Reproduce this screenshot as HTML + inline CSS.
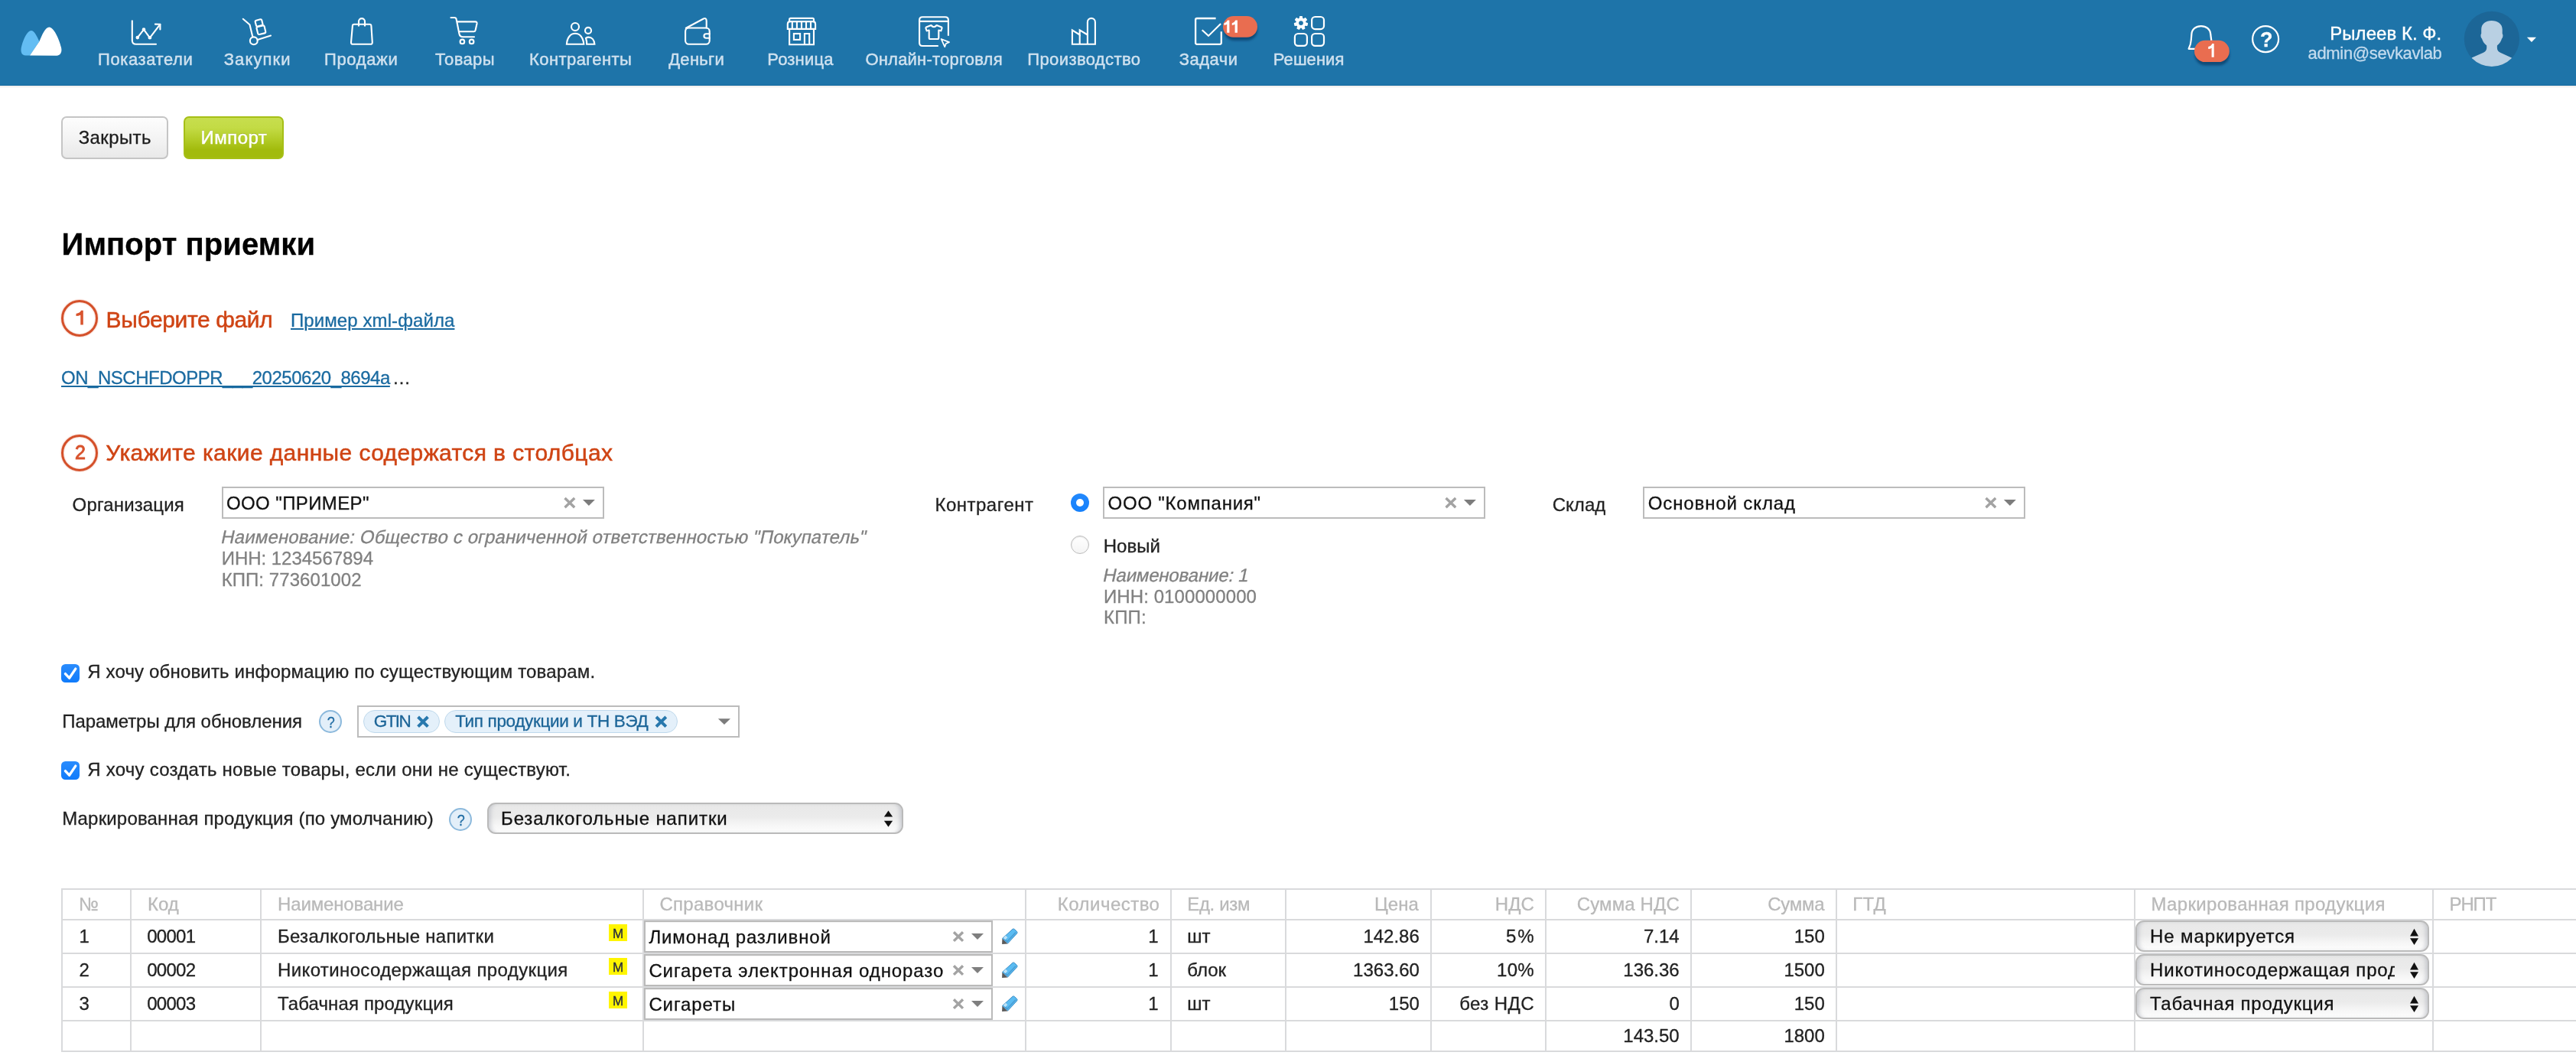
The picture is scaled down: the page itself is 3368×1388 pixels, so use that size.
<!DOCTYPE html>
<html lang="ru">
<head>
<meta charset="utf-8">
<title>Импорт приемки</title>
<style>
html,body{margin:0;padding:0;background:#fff;}
body{width:3368px;height:1388px;overflow:hidden;position:relative;font-family:"Liberation Sans",sans-serif;}
.t{position:absolute;white-space:pre;line-height:1;-webkit-text-stroke:0.3px currentColor;font-family:"Liberation Sans",sans-serif;}
.abs{position:absolute;box-sizing:border-box;}
#hdr{left:0;top:0;width:3368px;height:112px;background:#1e74a9;border-bottom:1.3px solid #14699f;box-shadow:0 1px 0 #f8f3f1,0 2px 1px rgba(0,0,0,.07);}
svg{position:absolute;overflow:visible;}
.btn{border-radius:7px;border:2px solid #c5c5c5;background:linear-gradient(#fdfdfd,#f4f4f4 50%,#e9e9e9);}
.btn.g{border-color:#a6bf17;background:linear-gradient(#c7de4e 0%,#c3db45 25%,#b2cb26 55%,#a2bb0d 80%,#a2bb0d 100%);}
.step{width:48px;height:48px;border-radius:50%;border:3.6px solid #d4502a;box-shadow:0 0 2px rgba(216,83,45,.6), inset 0 0 2px rgba(216,83,45,.5);}
.combo{height:42px;border:2px solid #bcbcbc;background:#fff;}
.hq{width:30px;height:30px;border-radius:50%;border:2px solid #8cb9dc;background:#e3eff9;}
.chip{height:30px;border-radius:15px;border:1.5px solid #bfd9ec;background:#e4f0fa;}
.sel{border-radius:11px;border:2px solid #bababa;background:linear-gradient(#e8e8e8 0%,#ebebeb 45%,#f5f5f5 70%,#fdfdfd 100%);box-shadow:inset 6px 0 5px -3px rgba(160,165,175,.45),inset -6px 0 5px -3px rgba(160,165,175,.45);}
.cb{width:24px;height:24px;border-radius:5.5px;background:linear-gradient(#2a8cfd,#107bfb);}
.v{width:2px;top:1161px;height:214px;background:#d9dadc;}
.h{left:80px;width:3288px;height:2px;background:#d9dadc;}
.m{width:24px;height:22px;background:#fff500;}
.rc{height:42px;border:2px solid #bababa;background:#fff;box-shadow:inset 0 1px 1px rgba(0,0,0,.05);}
</style>
</head>
<body>
<div id="hdr" class="abs"></div>
<!--ICONS-->
<svg width="3368" height="1388" viewBox="0 0 3368 1388" style="left:0;top:0">
<!-- logo -->
<path d="M33.5 72.6 C28 72.6 26.3 67 28.3 60 C31 50 36 40 40.7 40 C45 40 48.5 48 51.4 54.2 L39 72.6 Z" fill="#63bdf3"/>
<path d="M39 72.6 L51.4 54.2 C55 46 59 35.6 64.4 35.6 C70 35.6 77 50 80 62 C81.5 68 79 72.7 74 72.7 Z" fill="#fff"/>
<g fill="none" stroke="#fff" stroke-width="2.12" stroke-linecap="round" stroke-linejoin="round">
<!-- 1 chart -->
<path d="M172.8 27.2 V52.8 Q172.8 57.8 177.8 57.8 H204"/>
<polyline points="179.8,49.1 188,38.6 195.9,49.3 209.3,31.9"/>
<polyline points="202.9,31.6 209.4,31.8 209.4,38.4"/>
<!-- 2 hand truck -->
<path d="M317.8 24.8 L326.5 32.2 L330.3 47.9"/>
<circle cx="331.8" cy="53.3" r="4.9"/>
<path d="M336.6 51.9 L354 46.6"/>
<rect x="334.2" y="25.9" width="8.8" height="8" rx="1.6" transform="rotate(-14 338.6 29.9)"/>
<rect x="336.2" y="34.1" width="10.4" height="10.2" rx="1.8" transform="rotate(-13 341.4 39.2)"/>
<!-- 3 bag -->
<path d="M463 31.8 H483.3 Q485.3 31.8 485.4 33.8 L486.8 55.3 Q486.9 57.8 484.4 57.8 H461.4 Q458.9 57.8 459 55.3 L460.9 33.8 Q461 31.8 463 31.8 Z"/>
<path d="M469 34.4 V28.1 A4 4 0 0 1 477 28.1 V34.4" stroke-linecap="butt"/>
<!-- 4 cart -->
<path d="M589.5 23 H594 Q596.3 23 596.7 25.3 L600.4 44 Q601.2 48.3 605.3 48.3 H620"/>
<path d="M598 28.4 H621.5 Q624 28.4 623.5 31 L621.6 39.5 Q621.2 41.2 619.5 41.2 H600.3"/>
<circle cx="604.4" cy="54.4" r="2.8"/><circle cx="616.6" cy="54.4" r="2.8"/>
<!-- 5 people -->
<circle cx="752" cy="35" r="5"/>
<path d="M740.9 57.8 C741.5 49 746 43.8 752 43.8 C758 43.8 762.7 49 763.3 57.8 Z" stroke-linejoin="miter"/>
<circle cx="769" cy="39.9" r="4"/>
<path d="M766 49.8 Q767.5 48.6 769.5 48.6 C774 48.6 777 52.5 777.4 57.8 H767.2 Q767.2 53.5 766 49.8 Z" stroke-linejoin="miter"/>
<!-- 6 wallet -->
<rect x="896.1" y="36.5" width="31.6" height="21.3" rx="4.5"/>
<path d="M896.8 36.8 L919.3 24.7 Q923.7 22.6 923.7 27.5 V36.5"/>
<path d="M927.7 44.2 H923.2 A2.75 2.75 0 0 0 923.2 49.7 H927.7"/>
<!-- 7 store -->
<g stroke-linecap="butt" stroke-linejoin="miter">
<path d="M1032.1 28.1 V25.4 Q1032.1 23.9 1033.6 23.9 H1062.5 Q1064 23.9 1064 25.4 V28.1"/>
<path d="M1029.8 37.9 V31.5 Q1029.8 28.1 1033.2 28.1 H1062.7 Q1066.1 28.1 1066.1 31.5 V37.9 Z"/>
<path d="M1035.8 28.1V37.9M1041.9 28.1V37.9M1048 28.1V37.9M1054 28.1V37.9M1060 28.1V37.9"/>
<path d="M1032.1 37.9 V58.2 H1064 V37.9"/>
<rect x="1037.9" y="44" width="8.2" height="7.9"/>
<path d="M1051.9 58.2 V44 H1058.2 V58.2"/>
</g>
<!-- 8 online -->
<path d="M1239.9 46.7 V26.3 Q1239.9 22.3 1235.9 22.3 H1206.1 Q1202.1 22.3 1202.1 26.3 V56 Q1202.1 60 1206.1 60 H1226.8" stroke-linecap="butt"/>
<path d="M1202.1 27.9 H1239.9"/>
<path d="M1217.4 33 Q1221 37.4 1224.6 33 L1231 35.5 Q1231.8 36 1231.5 37 L1230.3 40.3 L1227.3 39.5 V49.5 Q1227.3 51 1225.8 51 H1216.2 Q1214.7 51 1214.7 49.5 V39.5 L1211.7 40.3 L1210.5 37 Q1210.2 36 1211 35.5 Z"/>
<path d="M1230.6 51 L1241 55.2 L1236.8 57 L1235.2 61.2 Z" stroke-width="1.8"/>
<!-- 9 factory -->
<g stroke-linecap="butt" stroke-linejoin="miter">
<path d="M1401.9 57.8 V39.3 L1411.7 45.5 V39.3 L1421.9 45.5 V28.9 A5 5 0 0 1 1431.9 28.9 V57.8 Z"/>
<path d="M1411.7 45.5 V57.8 M1421.9 45.5 V57.8"/>
</g>
<!-- 10 tasks -->
<path d="M1589.6 24 H1565 Q1563.1 24 1563.1 26 V55.8 Q1563.1 57.8 1565 57.8 H1594.8 Q1596.8 57.8 1596.8 55.8 V41.2" stroke-width="2.3" stroke-linecap="butt"/>
<path d="M1571.7 39.3 L1580 46.9 L1596.1 30.9" stroke-linecap="butt" stroke-linejoin="miter"/>
<!-- 11 solutions -->
<rect x="1715.1" y="22" width="15.9" height="16.1" rx="4.4" stroke-width="2.2"/>
<rect x="1692.9" y="44" width="16" height="15.9" rx="4.4" stroke-width="2.2"/>
<rect x="1715.1" y="44" width="15.9" height="15.9" rx="4.4" stroke-width="2.2"/>
<!-- bell -->
<path d="M2870 63.8 H2861.6 Q2864.4 58.5 2864.8 52 L2865.4 44.5 C2865.8 38 2871 34.1 2877.8 34.1 C2884.6 34.1 2889.8 38 2890.2 44.5 L2891.4 54" stroke-width="2.2"/>
<!-- help -->
<circle cx="2962.1" cy="51.1" r="17" stroke-width="2.2"/>
</g>
<!-- chart dots -->
<g fill="#fff"><circle cx="179.8" cy="49.1" r="2.3"/><circle cx="188" cy="38.6" r="2.3"/><circle cx="195.9" cy="49.3" r="2.3"/></g>
<!-- gear -->
<g transform="translate(1700.95 30.05)" fill="#fff">
<circle r="6.7"/>
<rect x="-2.1" y="-9.1" width="4.2" height="5" rx="1" transform="rotate(0.00)"/><rect x="-2.1" y="-9.1" width="4.2" height="5" rx="1" transform="rotate(51.43)"/><rect x="-2.1" y="-9.1" width="4.2" height="5" rx="1" transform="rotate(102.86)"/><rect x="-2.1" y="-9.1" width="4.2" height="5" rx="1" transform="rotate(154.29)"/><rect x="-2.1" y="-9.1" width="4.2" height="5" rx="1" transform="rotate(205.71)"/><rect x="-2.1" y="-9.1" width="4.2" height="5" rx="1" transform="rotate(257.14)"/><rect x="-2.1" y="-9.1" width="4.2" height="5" rx="1" transform="rotate(308.57)"/>
<circle r="2.9" fill="#1e74a9"/>
</g>
<!-- badges -->
<filter id="bl" x="-20%" y="-20%" width="140%" height="160%"><feGaussianBlur stdDeviation="1.6"/></filter><rect x="1600" y="25.6" width="44" height="27.5" rx="13.75" fill="rgba(10,40,80,.55)" filter="url(#bl)"/>
<rect x="1599" y="21.1" width="45" height="27.7" rx="13.85" fill="#e96d50"/>
<rect x="2869.6" y="57.5" width="45.4" height="28" rx="14" fill="rgba(10,40,80,.55)" filter="url(#bl)"/>
<rect x="2869" y="52.8" width="45.8" height="28.3" rx="14.15" fill="#e96d50"/>
<!-- avatar -->
<clipPath id="avc"><circle cx="3257.9" cy="50.9" r="36.1"/></clipPath>
<circle cx="3257.9" cy="50.9" r="36.1" fill="#1c6697"/>
<g clip-path="url(#avc)" fill="#b9d0e3">
<path d="M3257.6 26.9 C3250 26.9 3244.2 31 3244.2 38.5 V44 C3243.1 45 3243.2 49 3245 50.5 C3246 54 3248 57 3251.2 59.6 V63 C3251 66 3249 68 3246.4 69.1 L3231.6 75.4 L3222 92 H3294 L3283.8 75.4 L3269.6 69.1 C3267 68 3264.9 66 3264.9 63 V59.6 C3268 57 3270 54 3271 50.5 C3272.7 49 3272.8 45 3271.7 44 V38.5 C3271.7 31 3265.5 26.9 3257.6 26.9 Z"/>
</g>
<path d="M3303.9 48.8 H3316 L3309.95 55 Z" fill="#fff"/>
</svg>


<!-- buttons -->
<div class="abs btn" style="left:80px;top:152px;width:140px;height:56px"></div>
<div class="abs btn g" style="left:240px;top:152px;width:131px;height:56px"></div>

<!-- steps -->
<div class="abs step" style="left:80px;top:392px"></div>
<div class="abs step" style="left:80px;top:568px"></div>

<!-- combos -->
<div class="abs combo" style="left:290px;top:636px;width:500px"></div>
<div class="abs combo" style="left:1442px;top:636px;width:500px"></div>
<div class="abs combo" style="left:2148px;top:636px;width:500px"></div>
<div class="abs combo" style="left:467px;top:922px;width:500px"></div>

<!-- radios -->
<div class="abs" style="left:1400px;top:645px;width:24px;height:24px;border-radius:50%;background:linear-gradient(#2389fd,#1580fb)"></div>
<div class="abs" style="left:1407px;top:652px;width:10px;height:10px;border-radius:50%;background:#fff"></div>
<div class="abs" style="left:1400px;top:700px;width:24px;height:24px;border-radius:50%;background:linear-gradient(#fff,#f4f4f4);border:1.2px solid #bdbdbd;box-shadow:inset 0 1px 1.5px rgba(0,0,0,.12)"></div>

<!-- checkboxes -->
<div class="abs cb" style="left:80px;top:868px"></div>
<div class="abs cb" style="left:80px;top:995px"></div>

<!-- help icons -->
<div class="abs hq" style="left:417px;top:928px"></div>
<div class="abs hq" style="left:587px;top:1056px"></div>

<!-- chips -->
<div class="abs chip" style="left:475px;top:928px;width:100px"></div>
<div class="abs chip" style="left:581px;top:928px;width:305px"></div>

<!-- default select -->
<div class="abs sel" style="left:637px;top:1049px;width:544px;height:41px"></div>

<!-- table grid -->
<div class="abs h" style="top:1161px"></div>
<div class="abs h" style="top:1201px"></div>
<div class="abs h" style="top:1245px"></div>
<div class="abs h" style="top:1289px"></div>
<div class="abs h" style="top:1333px"></div>
<div class="abs h" style="top:1373px"></div>
<div class="abs v" style="left:80px"></div>
<div class="abs v" style="left:170px"></div>
<div class="abs v" style="left:340px"></div>
<div class="abs v" style="left:840px"></div>
<div class="abs v" style="left:1340px"></div>
<div class="abs v" style="left:1530px"></div>
<div class="abs v" style="left:1680px"></div>
<div class="abs v" style="left:1870px"></div>
<div class="abs v" style="left:2020px"></div>
<div class="abs v" style="left:2210px"></div>
<div class="abs v" style="left:2400px"></div>
<div class="abs v" style="left:2790px"></div>
<div class="abs v" style="left:3180px"></div>

<!-- row widgets -->
<div class="abs m" style="left:796px;top:1208px"></div>
<div class="abs m" style="left:796px;top:1252px"></div>
<div class="abs m" style="left:796px;top:1296px"></div>
<div class="abs rc" style="left:842px;top:1203px;width:456px"></div>
<div class="abs rc" style="left:842px;top:1247px;width:456px"></div>
<div class="abs rc" style="left:842px;top:1291px;width:456px"></div>
<div class="abs sel" style="left:2792px;top:1203px;width:384px;height:41px"></div>
<div class="abs sel" style="left:2792px;top:1247px;width:384px;height:41px"></div>
<div class="abs sel" style="left:2792px;top:1291px;width:384px;height:41px"></div>

<div id="txt" class="abs" style="left:0;top:0;width:3368px;height:1388px;will-change:transform">
<div class="t" style="left:128.0px;top:67.4px;font-size:22px;color:#cfe1ef;letter-spacing:0.594px;-webkit-text-stroke:0.45px #cfe1ef;">Показатели</div>
<div class="t" style="left:292.7px;top:67.4px;font-size:22px;color:#cfe1ef;letter-spacing:1.110px;-webkit-text-stroke:0.45px #cfe1ef;">Закупки</div>
<div class="t" style="left:424.0px;top:67.4px;font-size:22px;color:#cfe1ef;letter-spacing:0.634px;-webkit-text-stroke:0.45px #cfe1ef;">Продажи</div>
<div class="t" style="left:569.0px;top:67.4px;font-size:22px;color:#cfe1ef;letter-spacing:0.365px;-webkit-text-stroke:0.45px #cfe1ef;">Товары</div>
<div class="t" style="left:692.0px;top:67.4px;font-size:22px;color:#cfe1ef;letter-spacing:0.425px;-webkit-text-stroke:0.45px #cfe1ef;">Контрагенты</div>
<div class="t" style="left:874.2px;top:67.4px;font-size:22px;color:#cfe1ef;letter-spacing:0.287px;-webkit-text-stroke:0.45px #cfe1ef;">Деньги</div>
<div class="t" style="left:1003.3px;top:67.4px;font-size:22px;color:#cfe1ef;letter-spacing:0.179px;-webkit-text-stroke:0.45px #cfe1ef;">Розница</div>
<div class="t" style="left:1131.4px;top:67.4px;font-size:22px;color:#cfe1ef;letter-spacing:0.221px;-webkit-text-stroke:0.45px #cfe1ef;">Онлайн-торговля</div>
<div class="t" style="left:1343.3px;top:67.4px;font-size:22px;color:#cfe1ef;letter-spacing:0.389px;-webkit-text-stroke:0.45px #cfe1ef;">Производство</div>
<div class="t" style="left:1541.7px;top:67.4px;font-size:22px;color:#cfe1ef;letter-spacing:0.504px;-webkit-text-stroke:0.45px #cfe1ef;">Задачи</div>
<div class="t" style="left:1664.8px;top:67.4px;font-size:22px;color:#cfe1ef;letter-spacing:0.070px;-webkit-text-stroke:0.45px #cfe1ef;">Решения</div>
<div class="t" style="left:3046.3px;top:31.7px;font-size:24px;color:#fff;letter-spacing:0.033px;-webkit-text-stroke:0.35px #fff;">Рылеев К. Ф.</div>
<div class="t" style="left:3017.6px;top:58.9px;font-size:22px;color:#c3dbee;letter-spacing:-0.347px;">admin@sevkavlab</div>
<div class="t" style="left:2955.1px;top:39.0px;font-size:27px;color:#fff;font-weight:bold;">?</div>
<div class="t" style="left:102.7px;top:167.8px;font-size:24px;color:#1c1c1c;letter-spacing:0.394px;">Закрыть</div>
<div class="t" style="left:262.6px;top:167.8px;font-size:24px;color:#fff;letter-spacing:0.459px;-webkit-text-stroke:0.45px #fff;text-shadow:0 -1px 0 rgba(120,140,0,.5);">Импорт</div>
<div class="t" style="left:80.6px;top:299.3px;font-size:40px;color:#000;letter-spacing:0.057px;font-weight:bold;">Импорт приемки</div>
<div class="t" style="left:138.6px;top:403.2px;font-size:30px;color:#cf4414;letter-spacing:-0.376px;-webkit-text-stroke:0.5px #cf4414;">Выберите файл</div>
<div class="t" style="left:380.0px;top:406.8px;font-size:24px;color:#1a6aa0;letter-spacing:0.086px;text-decoration:underline;">Пример xml-файла</div>
<div class="t" style="left:80.0px;top:481.8px;font-size:24px;color:#1a6aa0;letter-spacing:-0.481px;text-decoration:underline;">ON_NSCHFDOPPR___20250620_8694a</div>
<div class="t" style="left:513.0px;top:481.8px;font-size:24px;color:#222;">…</div>
<div class="t" style="left:98.0px;top:579.2px;font-size:25px;color:#d8532d;-webkit-text-stroke:1px #d8532d;">2</div>
<div class="t" style="left:138.3px;top:576.6px;font-size:30px;color:#cf4414;letter-spacing:0.400px;-webkit-text-stroke:0.5px #cf4414;">Укажите какие данные содержатся в столбцах</div>
<div class="t" style="left:94.6px;top:647.6px;font-size:24px;color:#222;letter-spacing:0.145px;">Организация</div>
<div class="t" style="left:296.0px;top:645.7px;font-size:24px;color:#111;letter-spacing:0.389px;">ООО "ПРИМЕР"</div>
<div class="t" style="left:287.6px;top:689.6px;font-size:24px;color:#808080;letter-spacing:0.128px;transform:skewX(-12deg);transform-origin:0 85%;">Наименование: Общество с ограниченной ответственностью "Покупатель"</div>
<div class="t" style="left:289.7px;top:717.6px;font-size:24px;color:#808080;letter-spacing:-0.028px;">ИНН: 1234567894</div>
<div class="t" style="left:289.7px;top:745.5px;font-size:24px;color:#808080;letter-spacing:0.069px;">КПП: 773601002</div>
<div class="t" style="left:1222.5px;top:647.6px;font-size:24px;color:#222;letter-spacing:0.490px;">Контрагент</div>
<div class="t" style="left:1448.6px;top:646.0px;font-size:24px;color:#111;letter-spacing:0.767px;">ООО "Компания"</div>
<div class="t" style="left:2029.7px;top:647.6px;font-size:24px;color:#222;letter-spacing:0.033px;">Склад</div>
<div class="t" style="left:2154.8px;top:646.0px;font-size:24px;color:#111;letter-spacing:0.875px;">Основной склад</div>
<div class="t" style="left:1442.7px;top:702.2px;font-size:24px;color:#222;letter-spacing:0.028px;">Новый</div>
<div class="t" style="left:1441.0px;top:739.7px;font-size:24px;color:#808080;letter-spacing:-0.194px;transform:skewX(-12deg);transform-origin:0 85%;">Наименование: 1</div>
<div class="t" style="left:1443.0px;top:768.0px;font-size:24px;color:#808080;letter-spacing:0.086px;">ИНН: 0100000000</div>
<div class="t" style="left:1443.0px;top:795.2px;font-size:24px;color:#808080;letter-spacing:0.172px;">КПП:</div>
<div class="t" style="left:114.2px;top:865.9px;font-size:24px;color:#222;letter-spacing:0.165px;">Я хочу обновить информацию по существующим товарам.</div>
<div class="t" style="left:81.2px;top:931.0px;font-size:24px;color:#222;letter-spacing:-0.060px;">Параметры для обновления</div>
<div class="t" style="left:427.3px;top:933.9px;font-size:20.5px;color:#1f6ba3;transform:scaleX(.88);transform-origin:50% 50%;">?</div>
<div class="t" style="left:488.8px;top:931.6px;font-size:22.5px;color:#1b6497;letter-spacing:-1.633px;">GTIN</div>
<div class="t" style="left:595.2px;top:931.6px;font-size:22.5px;color:#1b6497;letter-spacing:-0.342px;">Тип продукции и ТН ВЭД</div>
<div class="t" style="left:114.3px;top:993.8px;font-size:24px;color:#222;letter-spacing:0.249px;">Я хочу создать новые товары, если они не существуют.</div>
<div class="t" style="left:81.2px;top:1058.1px;font-size:24px;color:#222;letter-spacing:0.164px;">Маркированная продукция (по умолчанию)</div>
<div class="t" style="left:596.9px;top:1062.1px;font-size:20.5px;color:#1f6ba3;transform:scaleX(.88);transform-origin:50% 50%;">?</div>
<div class="t" style="left:655.0px;top:1057.7px;font-size:24px;color:#111;letter-spacing:0.889px;">Безалкогольные напитки</div>
<div class="t" style="left:103.0px;top:1170.0px;font-size:24px;color:#b9b9b9;">№</div>
<div class="t" style="left:193.0px;top:1170.0px;font-size:24px;color:#b9b9b9;">Код</div>
<div class="t" style="left:363.0px;top:1170.0px;font-size:24px;color:#b9b9b9;letter-spacing:-0.139px;">Наименование</div>
<div class="t" style="left:862.4px;top:1170.0px;font-size:24px;color:#b9b9b9;letter-spacing:0.300px;">Справочник</div>
<div class="t" style="left:1382.8px;top:1170.0px;font-size:24px;color:#b9b9b9;letter-spacing:0.473px;">Количество</div>
<div class="t" style="left:1552.3px;top:1170.0px;font-size:24px;color:#b9b9b9;letter-spacing:-0.344px;">Ед. изм</div>
<div class="t" style="left:1797.1px;top:1170.0px;font-size:24px;color:#b9b9b9;">Цена</div>
<div class="t" style="left:1954.8px;top:1170.0px;font-size:24px;color:#b9b9b9;">НДС</div>
<div class="t" style="left:2061.7px;top:1170.0px;font-size:24px;color:#b9b9b9;letter-spacing:0.129px;">Сумма НДС</div>
<div class="t" style="left:2311.2px;top:1170.0px;font-size:24px;color:#b9b9b9;letter-spacing:-0.220px;">Сумма</div>
<div class="t" style="left:2422.3px;top:1170.0px;font-size:24px;color:#b9b9b9;letter-spacing:0.113px;">ГТД</div>
<div class="t" style="left:2812.5px;top:1170.0px;font-size:24px;color:#b9b9b9;letter-spacing:0.326px;">Маркированная продукция</div>
<div class="t" style="left:3202.6px;top:1170.0px;font-size:24px;color:#b9b9b9;letter-spacing:-1.165px;">РНПТ</div>
<div class="t" style="left:103.5px;top:1211.8px;font-size:24px;color:#222;">1</div>
<div class="t" style="left:192.2px;top:1211.8px;font-size:24px;color:#222;letter-spacing:-0.702px;">00001</div>
<div class="t" style="left:363.0px;top:1211.8px;font-size:24px;color:#222;letter-spacing:0.275px;">Безалкогольные напитки</div>
<div class="t" style="left:800.9px;top:1211.7px;font-size:17px;color:#262c40;">M</div>
<div class="t" style="left:848.4px;top:1212.6px;font-size:24px;color:#111;letter-spacing:0.875px;">Лимонад разливной</div>
<div class="t" style="left:1501.3px;top:1211.8px;font-size:24px;color:#222;">1</div>
<div class="t" style="left:1552.3px;top:1211.8px;font-size:24px;color:#222;">шт</div>
<div class="t" style="left:1782.4px;top:1211.8px;font-size:24px;color:#222;">142.86</div>
<div class="t" style="left:1969.1px;top:1211.8px;font-size:24px;color:#222;letter-spacing:1.756px;">5%</div>
<div class="t" style="left:2149.0px;top:1211.8px;font-size:24px;color:#222;">7.14</div>
<div class="t" style="left:2345.7px;top:1211.8px;font-size:24px;color:#222;">150</div>
<div class="t" style="left:2811.0px;top:1211.6px;font-size:24px;color:#111;letter-spacing:0.890px;">Не маркируется</div>
<div class="t" style="left:103.5px;top:1255.8px;font-size:24px;color:#222;">2</div>
<div class="t" style="left:192.2px;top:1255.8px;font-size:24px;color:#222;letter-spacing:-0.702px;">00002</div>
<div class="t" style="left:363.0px;top:1255.8px;font-size:24px;color:#222;letter-spacing:0.378px;">Никотиносодержащая продукция</div>
<div class="t" style="left:800.9px;top:1255.7px;font-size:17px;color:#262c40;">M</div>
<div class="t" style="left:848.4px;top:1256.6px;font-size:24px;color:#111;letter-spacing:0.890px;">Сигарета электронная одноразо</div>
<div class="t" style="left:1501.3px;top:1255.8px;font-size:24px;color:#222;">1</div>
<div class="t" style="left:1552.3px;top:1255.8px;font-size:24px;color:#222;">блок</div>
<div class="t" style="left:1769.1px;top:1255.8px;font-size:24px;color:#222;">1363.60</div>
<div class="t" style="left:1957.1px;top:1255.8px;font-size:24px;color:#222;letter-spacing:0.198px;">10%</div>
<div class="t" style="left:2122.3px;top:1255.8px;font-size:24px;color:#222;">136.36</div>
<div class="t" style="left:2332.4px;top:1255.8px;font-size:24px;color:#222;">1500</div>
<div class="t" style="left:2811.0px;top:1255.6px;font-size:24px;color:#111;letter-spacing:0.843px;overflow:hidden;width:320.4px;">Никотиносодержащая прод</div>
<div class="t" style="left:103.5px;top:1299.7px;font-size:24px;color:#222;">3</div>
<div class="t" style="left:192.2px;top:1299.7px;font-size:24px;color:#222;letter-spacing:-0.702px;">00003</div>
<div class="t" style="left:363.0px;top:1299.7px;font-size:24px;color:#222;letter-spacing:0.133px;">Табачная продукция</div>
<div class="t" style="left:800.9px;top:1299.6px;font-size:17px;color:#262c40;">M</div>
<div class="t" style="left:848.4px;top:1300.5px;font-size:24px;color:#111;letter-spacing:0.900px;">Сигареты</div>
<div class="t" style="left:1501.3px;top:1299.7px;font-size:24px;color:#222;">1</div>
<div class="t" style="left:1552.3px;top:1299.7px;font-size:24px;color:#222;">шт</div>
<div class="t" style="left:1815.8px;top:1299.7px;font-size:24px;color:#222;">150</div>
<div class="t" style="left:1908.2px;top:1299.7px;font-size:24px;color:#222;letter-spacing:0.406px;">без НДС</div>
<div class="t" style="left:2182.4px;top:1299.7px;font-size:24px;color:#222;">0</div>
<div class="t" style="left:2345.7px;top:1299.7px;font-size:24px;color:#222;">150</div>
<div class="t" style="left:2811.0px;top:1299.5px;font-size:24px;color:#111;letter-spacing:0.763px;">Табачная продукция</div>
<div class="t" style="left:2122.3px;top:1341.6px;font-size:24px;color:#222;">143.50</div>
<div class="t" style="left:2332.4px;top:1341.6px;font-size:24px;color:#222;">1800</div>
</div>
<svg width="3368" height="1388" viewBox="0 0 3368 1388" style="left:0;top:0">
<path d="M738.5 651 L751.2 663.2 M751.2 651 L738.5 663.2" stroke="#a3a3a3" stroke-width="3.4" fill="none"/>
<path d="M761.9 653 H777.9 L769.9 660.9 Z" fill="#7c7c7c"/>
<path d="M1890.5 651 L1903.2 663.2 M1903.2 651 L1890.5 663.2" stroke="#a3a3a3" stroke-width="3.4" fill="none"/>
<path d="M1913.9 653 H1929.9 L1921.9 660.9 Z" fill="#7c7c7c"/>
<path d="M2596.5 651 L2609.2 663.2 M2609.2 651 L2596.5 663.2" stroke="#a3a3a3" stroke-width="3.4" fill="none"/>
<path d="M2619.9 653 H2635.9 L2627.9 660.9 Z" fill="#7c7c7c"/>
<path d="M938.9 939.2 H955 L946.95 946.9 Z" fill="#7c7c7c"/>
<path d="M1247 1218.2 L1259 1229.9 M1259 1218.2 L1247 1229.9" stroke="#a3a3a3" stroke-width="3.4" fill="none"/>
<path d="M1270 1220 H1286 L1278.0 1228 Z" fill="#7f7f7f"/>
<g transform="translate(0 0)"><path d="M1310.4 1226.5 L1310.1 1233.9 L1317.7 1233.5 Z" fill="#5a5a5a"/><path d="M1324 1214.3 Q1325.2 1213.4 1326.4 1214.5 L1329.6 1217.6 Q1330.6 1218.8 1329.6 1220 L1317.7 1232.9 L1310.6 1226.5 Z" fill="#5bbcf2" stroke="#3f8fc6" stroke-width="1"/><path d="M1312.6 1226.6 L1316.8 1230.6 L1328 1218.6" fill="none" stroke="#4a9fd6" stroke-width="1.6"/><path d="M1311.8 1225.8 l3 -3 l2.5 2.5 l-3 3z" fill="#bfe3f8"/></g>
<path d="M1247 1262.2 L1259 1273.9 M1259 1262.2 L1247 1273.9" stroke="#a3a3a3" stroke-width="3.4" fill="none"/>
<path d="M1270 1264 H1286 L1278.0 1272 Z" fill="#7f7f7f"/>
<g transform="translate(0 44)"><path d="M1310.4 1226.5 L1310.1 1233.9 L1317.7 1233.5 Z" fill="#5a5a5a"/><path d="M1324 1214.3 Q1325.2 1213.4 1326.4 1214.5 L1329.6 1217.6 Q1330.6 1218.8 1329.6 1220 L1317.7 1232.9 L1310.6 1226.5 Z" fill="#5bbcf2" stroke="#3f8fc6" stroke-width="1"/><path d="M1312.6 1226.6 L1316.8 1230.6 L1328 1218.6" fill="none" stroke="#4a9fd6" stroke-width="1.6"/><path d="M1311.8 1225.8 l3 -3 l2.5 2.5 l-3 3z" fill="#bfe3f8"/></g>
<path d="M1247 1306.2 L1259 1317.9 M1259 1306.2 L1247 1317.9" stroke="#a3a3a3" stroke-width="3.4" fill="none"/>
<path d="M1270 1308 H1286 L1278.0 1316 Z" fill="#7f7f7f"/>
<g transform="translate(0 88)"><path d="M1310.4 1226.5 L1310.1 1233.9 L1317.7 1233.5 Z" fill="#5a5a5a"/><path d="M1324 1214.3 Q1325.2 1213.4 1326.4 1214.5 L1329.6 1217.6 Q1330.6 1218.8 1329.6 1220 L1317.7 1232.9 L1310.6 1226.5 Z" fill="#5bbcf2" stroke="#3f8fc6" stroke-width="1"/><path d="M1312.6 1226.6 L1316.8 1230.6 L1328 1218.6" fill="none" stroke="#4a9fd6" stroke-width="1.6"/><path d="M1311.8 1225.8 l3 -3 l2.5 2.5 l-3 3z" fill="#bfe3f8"/></g>
<path d="M85.4 880.6 L90.6 886.2 L98.8 874.1" stroke="#fff" stroke-width="3.3" fill="none" stroke-linecap="round" stroke-linejoin="round"/>
<path d="M85.4 1007.6 L90.6 1013.2 L98.8 1001.1" stroke="#fff" stroke-width="3.3" fill="none" stroke-linecap="round" stroke-linejoin="round"/>
<path d="M546.6 937 L559.4 949.6 M559.4 937 L546.6 949.6" stroke="#2878ad" stroke-width="4" fill="none"/>
<path d="M858 937 L870.8 949.6 M870.8 937 L858 949.6" stroke="#2878ad" stroke-width="4" fill="none"/>
<path d="M1155.9 1067.5 H1167.1 L1161.5 1059.5 Z" fill="#111"/><path d="M1155.9 1072.6999999999998 H1167.1 L1161.5 1080.6999999999998 Z" fill="#111"/>
<path d="M3151 1223.4 H3162 L3156.5 1213.8 Z" fill="#111"/><path d="M3151 1226.2 H3162 L3156.5 1234.9 Z" fill="#111"/>
<path d="M3151 1267.4 H3162 L3156.5 1257.8 Z" fill="#111"/><path d="M3151 1270.2 H3162 L3156.5 1278.9 Z" fill="#111"/>
<path d="M3151 1311.4 H3162 L3156.5 1301.8 Z" fill="#111"/><path d="M3151 1314.2 H3162 L3156.5 1322.9 Z" fill="#111"/>
<path d="M1607.4 26.5 V42.7 H1604.2 V31.8 Q1602.5 32.8 1600.4 33.0 V30.2 Q1603.7 29.6 1604.9 26.5 Z" fill="#fff"/><path d="M1617.9 26.5 V42.7 H1614.6 V31.8 Q1612.9 32.8 1610.8 33.0 V30.2 Q1614.1 29.6 1615.3 26.5 Z" fill="#fff"/><path d="M2894.7 57.1 V74.7 H2891.6 V62.8 Q2889.6 63.9 2887.2 64.1 V61.1 Q2891.1 60.4 2892.3 57.1 Z" fill="#fff"/>
<path d="M108.8 405.8 V424.4 H105.3 V411.7 Q102.7 412.9 99.5 413.1 V409.9 Q104.8 409.3 106.0 405.8 Z" fill="#d8532d"/>
</svg>
</body>
</html>
